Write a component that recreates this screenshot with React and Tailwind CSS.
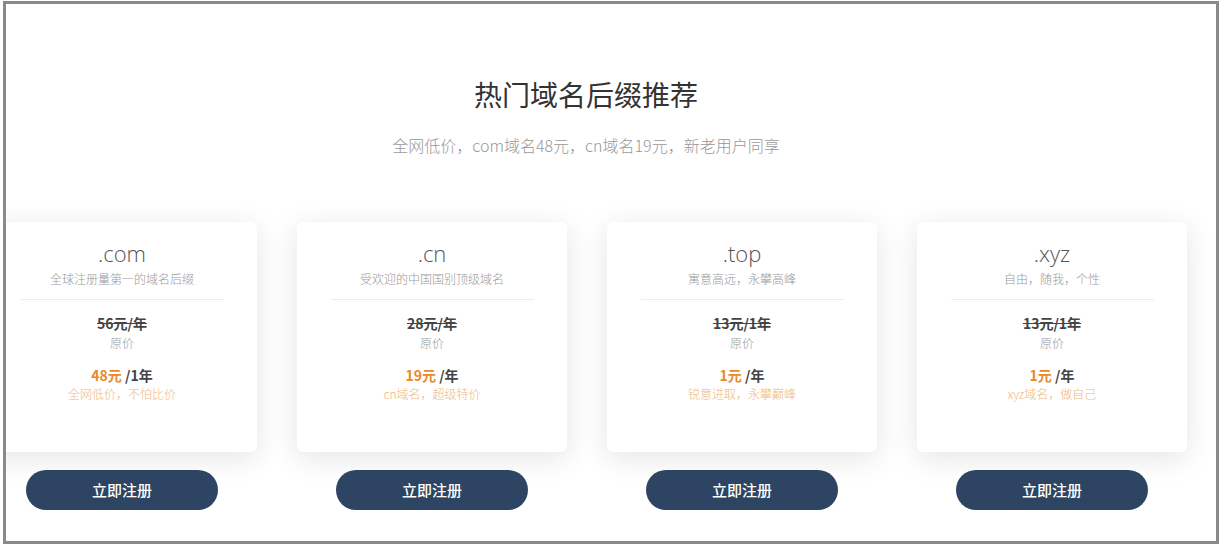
import React from "react";

const cards = [
  { name: ".com", desc: "全球注册量第一的域名后缀", old: "56元/年", price: "48元", unit: " /1年", promo: "全网低价，不怕比价" },
  { name: ".cn", desc: "受欢迎的中国国别顶级域名", old: "28元/年", price: "19元", unit: " /年", promo: "cn域名，超级特价" },
  { name: ".top", desc: "寓意高远，永攀高峰", old: "13元/1年", price: "1元", unit: " /年", promo: "锐意进取，永攀巅峰" },
  { name: ".xyz", desc: "自由，随我，个性", old: "13元/1年", price: "1元", unit: " /年", promo: "xyz域名，做自己" },
];

export default function App() {
  return (
    <div
      className="w-[1223px] h-[547px] bg-white pt-[1px] pl-[3px]"
      style={{ fontFamily: '"Noto Sans CJK SC", "Noto Sans", sans-serif' }}
    >
      <div className="w-[1216px] h-[543px] border-[3px] border-[#8a8a8a] overflow-hidden bg-white">
        <div className="w-[1200px] ml-[-20px] flex flex-col items-center pt-[70px]">
          <h1 className="text-[28px] leading-[40px] text-[#333] font-normal">热门域名后缀推荐</h1>
          <p className="mt-[19px] text-[16px] leading-[24px] text-[#999] font-light">全网低价，com域名48元，cn域名19元，新老用户同享</p>
          <div className="mt-[65px] ml-[2px] flex gap-[40px]">
            {cards.map((c) => (
              <div key={c.name} className="w-[270px] flex flex-col items-center">
                <div className="w-[270px] h-[230px] bg-white rounded-[6px] shadow-[0_6px_30px_rgba(0,0,0,0.11)] flex flex-col items-center pt-[16px]">
                  <div className="text-[22px] leading-[30px] text-[#555] font-light" style={{ fontFamily: '"Open Sans", "Noto Sans CJK SC", sans-serif' }}>{c.name}</div>
                  <div className="mt-[1px] text-[12px] leading-[20px] text-[#999] font-light">{c.desc}</div>
                  <div className="mt-[10px] w-[203px] h-px bg-[#ececec]"></div>
                  <div className="mt-[13px] text-[14px] leading-[20px] font-bold text-[#444] line-through">{c.old}</div>
                  <div className="text-[12px] leading-[20px] text-[#999] font-light">原价</div>
                  <div className="mt-[12px] text-[14px] leading-[20px] font-bold text-[#444]">
                    <span className="text-[#e98a2a]">{c.price}</span>
                    <span className="whitespace-pre">{c.unit}</span>
                  </div>
                  <div className="text-[12px] leading-[18px] text-[#f0b781] font-light">{c.promo}</div>
                </div>
                <button className="mt-[18px] w-[192px] h-[40px] rounded-full bg-[#2d4562] text-white text-[15px] font-medium">立即注册</button>
              </div>
            ))}
          </div>
        </div>
      </div>
    </div>
  );
}
